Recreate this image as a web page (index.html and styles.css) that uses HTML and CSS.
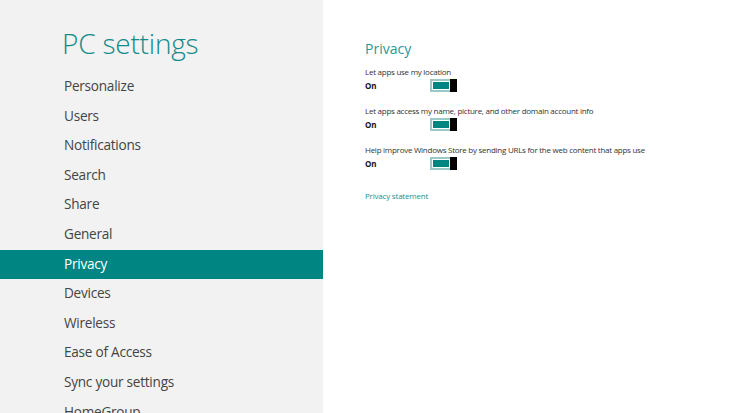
FILE: index.html
```html
<!DOCTYPE html>
<html>
<head>
<meta charset="utf-8">
<link rel="stylesheet" href="styles.css">
</head>
<body>
<div class="app">
  <aside class="sidebar">
    <h1 class="title">PC settings</h1>
    <ul class="nav">
      <li class="nav-item">Personalize</li>
      <li class="nav-item">Users</li>
      <li class="nav-item">Notifications</li>
      <li class="nav-item">Search</li>
      <li class="nav-item">Share</li>
      <li class="nav-item">General</li>
      <li class="nav-item active">Privacy</li>
      <li class="nav-item">Devices</li>
      <li class="nav-item">Wireless</li>
      <li class="nav-item">Ease of Access</li>
      <li class="nav-item">Sync your settings</li>
      <li class="nav-item">HomeGroup</li>
    </ul>
  </aside>
  <main class="content">
    <h2 class="heading">Privacy</h2>
    <div class="setting">
      <div class="label">Let apps use my location</div>
      <div class="row"><span class="state">On</span><span class="toggle"><span class="fill"></span><span class="thumb"></span></span></div>
    </div>
    <div class="setting">
      <div class="label">Let apps access my name, picture, and other domain account info</div>
      <div class="row"><span class="state">On</span><span class="toggle"><span class="fill"></span><span class="thumb"></span></span></div>
    </div>
    <div class="setting">
      <div class="label">Help improve Windows Store by sending URLs for the web content that apps use</div>
      <div class="row"><span class="state">On</span><span class="toggle"><span class="fill"></span><span class="thumb"></span></span></div>
    </div>
    <a class="link">Privacy statement</a>
  </main>
</div>
</body>
</html>
```

FILE: styles.css
```css
html, body {
  margin: 0;
  padding: 0;
  height: 100%;
  overflow: hidden;
}
body {
  font-family: "Open Sans", "Noto Sans", sans-serif;
  background: #ffffff;
}
.app {
  display: flex;
  height: 413px;
}
.sidebar {
  width: 323px;
  flex: none;
  background: #f2f2f2;
  overflow: hidden;
}
.title {
  margin: 23px 0 0 62px;
  font-size: 28px;
  font-weight: 300;
  color: #138b8b;
  line-height: 40px;
  height: 49px;
  letter-spacing: -0.2px;
}
.nav {
  list-style: none;
  margin: 0;
  padding: 0;
}
.nav-item {
  height: 29.6px;
  line-height: 28.6px;
  padding-left: 64px;
  font-size: 13.6px;
  letter-spacing: -0.25px;
  color: #444444;
  white-space: nowrap;
}
.nav-item.active {
  background: #008583;
  color: #ffffff;
}
.content {
  flex: 1;
  padding: 39px 0 0 42px;
}
.heading {
  margin: 0 0 7px 0;
  font-size: 14px;
  font-weight: 400;
  color: #2a9898;
  line-height: 20px;
}
.setting {
  margin-bottom: 12px;
}
.label {
  font-size: 8px;
  line-height: 12px;
  letter-spacing: -0.26px;
  color: #333333;
  white-space: nowrap;
}
.row {
  display: flex;
  align-items: center;
  height: 15px;
}
.state {
  width: 65px;
  font-size: 8px;
  font-weight: 700;
  color: #111111;
}
.toggle {
  display: flex;
  width: 27px;
  height: 13px;
  box-sizing: border-box;
  border: 2px solid #9cc9c8;
  border-right: none;
  background: #ffffff;
}
.fill {
  flex: 1;
  margin: 1px;
  background: #008583;
}
.thumb {
  width: 7px;
  margin-top: -2px;
  margin-bottom: -2px;
  background: #000000;
}
.link {
  display: block;
  margin-top: 19px;
  font-size: 8px;
  letter-spacing: -0.2px;
  color: #1e9090;
}
```
